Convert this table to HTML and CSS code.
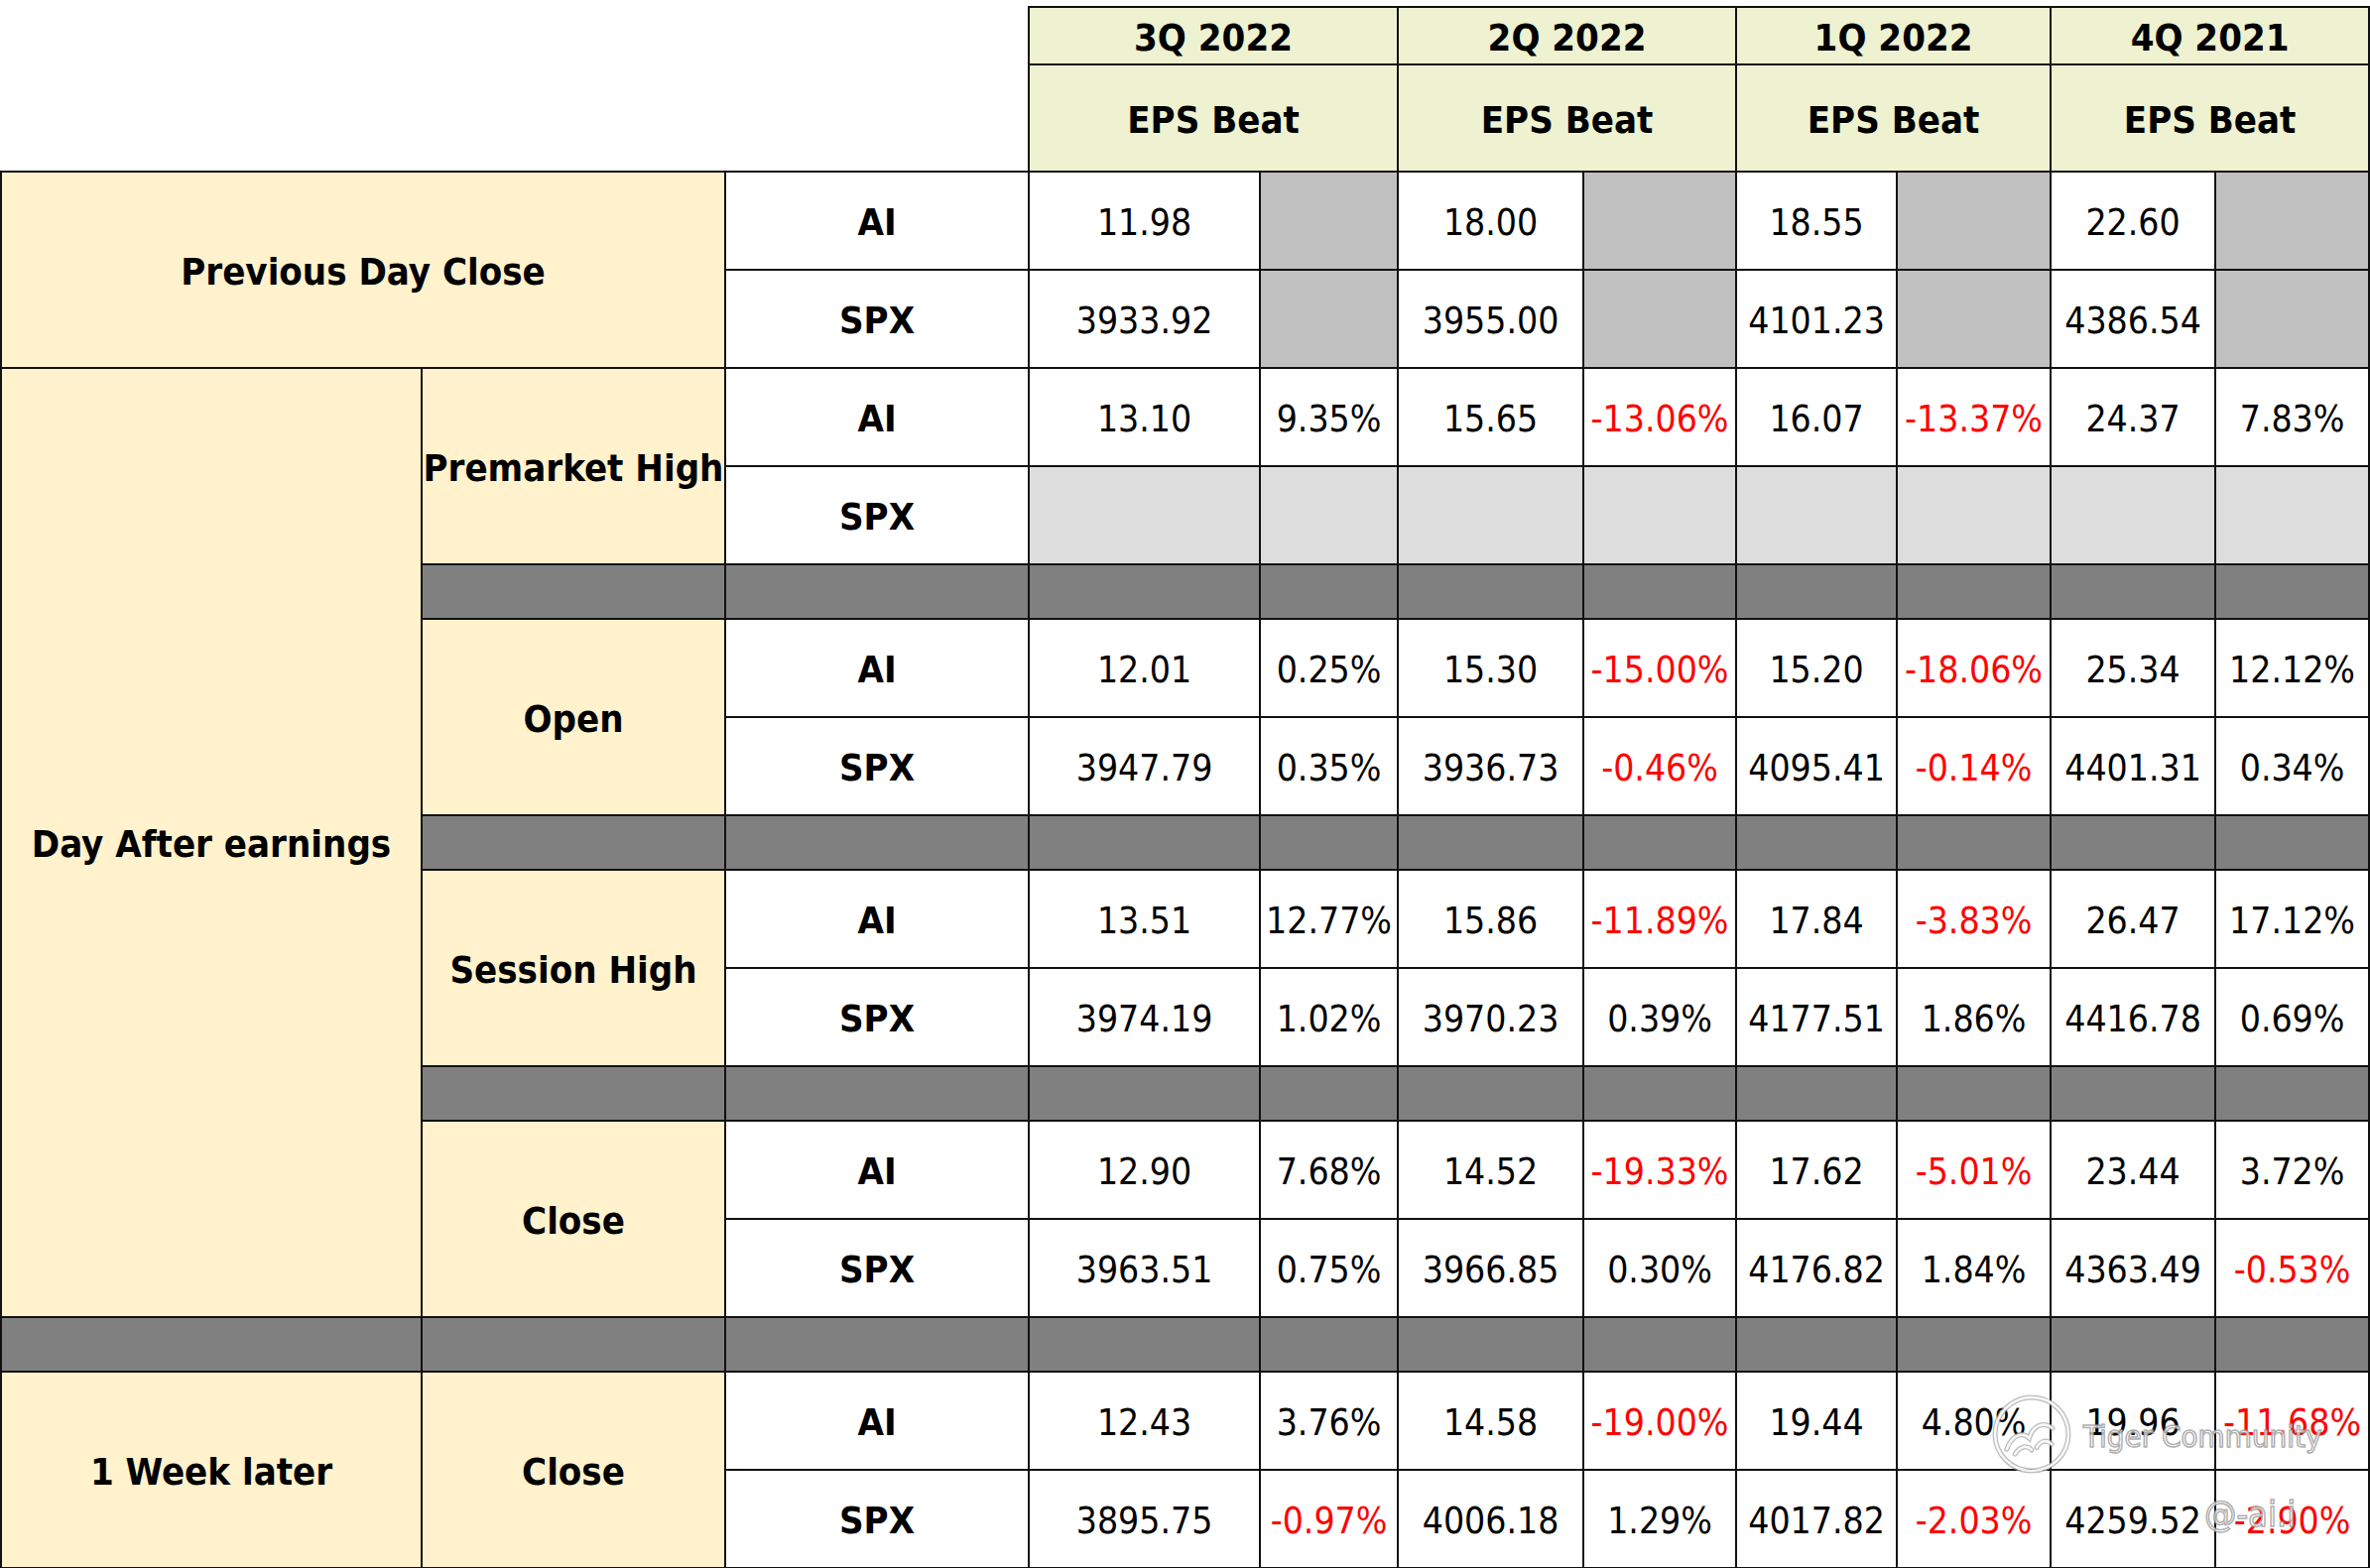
FILE: index.html
```html
<!DOCTYPE html>
<html lang="en">
<head>
<meta charset="utf-8">
<title>AI earnings reaction</title>
<link rel="stylesheet" href="styles.css">
</head>
<body>
<div class="wrap">
<table class="grid">
  <colgroup>
    <col class="c-l1"><col class="c-l2"><col class="c-tk">
    <col class="c-v1"><col class="c-p1">
    <col class="c-v2"><col class="c-p2">
    <col class="c-v3"><col class="c-p3">
    <col class="c-v4"><col class="c-p4">
  </colgroup>
  <thead>
    <tr class="hq">
      <td class="blank" colspan="3" rowspan="2"></td>
      <th colspan="2">3Q 2022</th>
      <th colspan="2">2Q 2022</th>
      <th colspan="2">1Q 2022</th>
      <th colspan="2">4Q 2021</th>
    </tr>
    <tr class="hb">
      <th colspan="2">EPS Beat</th>
      <th colspan="2">EPS Beat</th>
      <th colspan="2">EPS Beat</th>
      <th colspan="2">EPS Beat</th>
    </tr>
  </thead>
  <tbody>
    <tr class="row">
      <td class="lab" colspan="2" rowspan="2">Previous Day Close</td>
      <td class="tk">AI</td>
      <td>11.98</td><td class="g1"></td>
      <td>18.00</td><td class="g1"></td>
      <td>18.55</td><td class="g1"></td>
      <td>22.60</td><td class="g1"></td>
    </tr>
    <tr class="row">
      <td class="tk">SPX</td>
      <td>3933.92</td><td class="g1"></td>
      <td>3955.00</td><td class="g1"></td>
      <td>4101.23</td><td class="g1"></td>
      <td>4386.54</td><td class="g1"></td>
    </tr>
    <tr class="row">
      <td class="lab" rowspan="11">Day After earnings</td>
      <td class="lab" rowspan="2">Premarket High</td>
      <td class="tk">AI</td>
      <td>13.10</td><td>9.35%</td>
      <td>15.65</td><td class="neg">-13.06%</td>
      <td>16.07</td><td class="neg">-13.37%</td>
      <td>24.37</td><td>7.83%</td>
    </tr>
    <tr class="row">
      <td class="tk">SPX</td>
      <td class="g2"></td><td class="g2"></td>
      <td class="g2"></td><td class="g2"></td>
      <td class="g2"></td><td class="g2"></td>
      <td class="g2"></td><td class="g2"></td>
    </tr>
    <tr class="sep">
      <td></td><td></td>
      <td></td><td></td><td></td><td></td><td></td><td></td><td></td><td></td>
    </tr>
    <tr class="row">
      <td class="lab" rowspan="2">Open</td>
      <td class="tk">AI</td>
      <td>12.01</td><td>0.25%</td>
      <td>15.30</td><td class="neg">-15.00%</td>
      <td>15.20</td><td class="neg">-18.06%</td>
      <td>25.34</td><td>12.12%</td>
    </tr>
    <tr class="row">
      <td class="tk">SPX</td>
      <td>3947.79</td><td>0.35%</td>
      <td>3936.73</td><td class="neg">-0.46%</td>
      <td>4095.41</td><td class="neg">-0.14%</td>
      <td>4401.31</td><td>0.34%</td>
    </tr>
    <tr class="sep">
      <td></td><td></td>
      <td></td><td></td><td></td><td></td><td></td><td></td><td></td><td></td>
    </tr>
    <tr class="row">
      <td class="lab" rowspan="2">Session High</td>
      <td class="tk">AI</td>
      <td>13.51</td><td>12.77%</td>
      <td>15.86</td><td class="neg">-11.89%</td>
      <td>17.84</td><td class="neg">-3.83%</td>
      <td>26.47</td><td>17.12%</td>
    </tr>
    <tr class="row">
      <td class="tk">SPX</td>
      <td>3974.19</td><td>1.02%</td>
      <td>3970.23</td><td>0.39%</td>
      <td>4177.51</td><td>1.86%</td>
      <td>4416.78</td><td>0.69%</td>
    </tr>
    <tr class="sep">
      <td></td><td></td>
      <td></td><td></td><td></td><td></td><td></td><td></td><td></td><td></td>
    </tr>
    <tr class="row">
      <td class="lab" rowspan="2">Close</td>
      <td class="tk">AI</td>
      <td>12.90</td><td>7.68%</td>
      <td>14.52</td><td class="neg">-19.33%</td>
      <td>17.62</td><td class="neg">-5.01%</td>
      <td>23.44</td><td>3.72%</td>
    </tr>
    <tr class="row">
      <td class="tk">SPX</td>
      <td>3963.51</td><td>0.75%</td>
      <td>3966.85</td><td>0.30%</td>
      <td>4176.82</td><td>1.84%</td>
      <td>4363.49</td><td class="neg">-0.53%</td>
    </tr>
    <tr class="sep">
      <td></td><td></td><td></td>
      <td></td><td></td><td></td><td></td><td></td><td></td><td></td><td></td>
    </tr>
    <tr class="row">
      <td class="lab" rowspan="2">1 Week later</td>
      <td class="lab" rowspan="2">Close</td>
      <td class="tk">AI</td>
      <td>12.43</td><td>3.76%</td>
      <td>14.58</td><td class="neg">-19.00%</td>
      <td>19.44</td><td>4.80%</td>
      <td>19.96</td><td class="neg">-11.68%</td>
    </tr>
    <tr class="row">
      <td class="tk">SPX</td>
      <td>3895.75</td><td class="neg">-0.97%</td>
      <td>4006.18</td><td>1.29%</td>
      <td>4017.82</td><td class="neg">-2.03%</td>
      <td>4259.52</td><td class="neg">-2.90%</td>
    </tr>
  </tbody>
</table>

<div class="wm">
  <svg class="wm-logo" viewBox="0 0 100 100" width="84" height="84" aria-hidden="true">
    <g fill="none" stroke="#a8a8a8" stroke-width="6" stroke-linecap="round" opacity="0.75">
      <circle cx="50" cy="50" r="44"/>
      <path d="M20 68 C26 52 38 46 47 55 C51 40 64 34 75 43"/>
      <path d="M30 74 C36 64 44 63 50 69"/>
      <path d="M56 66 C60 58 68 56 74 62"/>
    </g>
    <g fill="none" stroke="#ffffff" stroke-width="3" stroke-linecap="round" opacity="0.9">
      <circle cx="50" cy="50" r="44"/>
      <path d="M20 68 C26 52 38 46 47 55 C51 40 64 34 75 43"/>
      <path d="M30 74 C36 64 44 63 50 69"/>
      <path d="M56 66 C60 58 68 56 74 62"/>
    </g>
  </svg>
  <span class="wm-name">Tiger Community</span>
  <span class="wm-user">@-ai.i</span>
</div>
</div>
</body>
</html>
```
FILE: styles.css
```css
html, body {
  margin: 0;
  padding: 0;
  background: #ffffff;
}

.wrap {
  position: relative;
  padding-top: 6px;
  width: 2389px;
}

.grid {
  border-collapse: collapse;
  table-layout: fixed;
  width: 2387px;
  font-family: "DejaVu Sans Condensed", "DejaVu Sans", sans-serif;
  font-stretch: condensed;
  color: #000;
}

.c-l1 { width: 424px; }
.c-l2 { width: 306px; }
.c-tk { width: 306px; }
.c-v1 { width: 233px; }
.c-p1 { width: 139px; }
.c-v2 { width: 187px; }
.c-p2 { width: 154px; }
.c-v3 { width: 162px; }
.c-p3 { width: 155px; }
.c-v4 { width: 166px; }
.c-p4 { width: 155px; }

.grid th,
.grid td {
  border: 2px solid #111;
  padding: 3px 0 0 0;
  text-align: center;
  vertical-align: middle;
  white-space: nowrap;
  overflow: hidden;
}

.grid td.blank {
  border: none;
  background: #fff;
}

.grid th {
  background: #eef2d0;
  font-weight: bold;
  font-size: 38px;
}

.hq th { height: 53px; }
.hb th { height: 103px; }

.row td {
  height: 94px;
  font-size: 37px;
  background: #fff;
}

.row td.tk {
  font-weight: bold;
  font-size: 38px;
}

.grid td.lab {
  background: #fff2cc;
  font-weight: bold;
  font-size: 38px;
}

.row td.g1 { background: #c0c0c0; }
.row td.g2 { background: #dddddd; }

.sep td {
  height: 50px;
  background: #808080;
}

.neg { color: #ff0000; }

.wm {
  position: absolute;
  left: 1990px;
  top: 1400px;
  width: 390px;
  height: 175px;
  pointer-events: none;
  font-family: "DejaVu Sans Condensed", "DejaVu Sans", sans-serif;
  white-space: nowrap;
}

.wm-logo {
  position: absolute;
  left: 16px;
  top: 4px;
}

.wm-name {
  position: absolute;
  left: 110px;
  top: 30px;
  font-size: 31px;
  color: rgba(255, 255, 255, 0.75);
  -webkit-text-stroke: 1.5px rgba(150, 150, 150, 0.75);
}

.wm-user {
  position: absolute;
  left: 232px;
  top: 106px;
  font-size: 36px;
  color: rgba(255, 255, 255, 0.75);
  -webkit-text-stroke: 1.5px rgba(150, 150, 150, 0.75);
}
```
